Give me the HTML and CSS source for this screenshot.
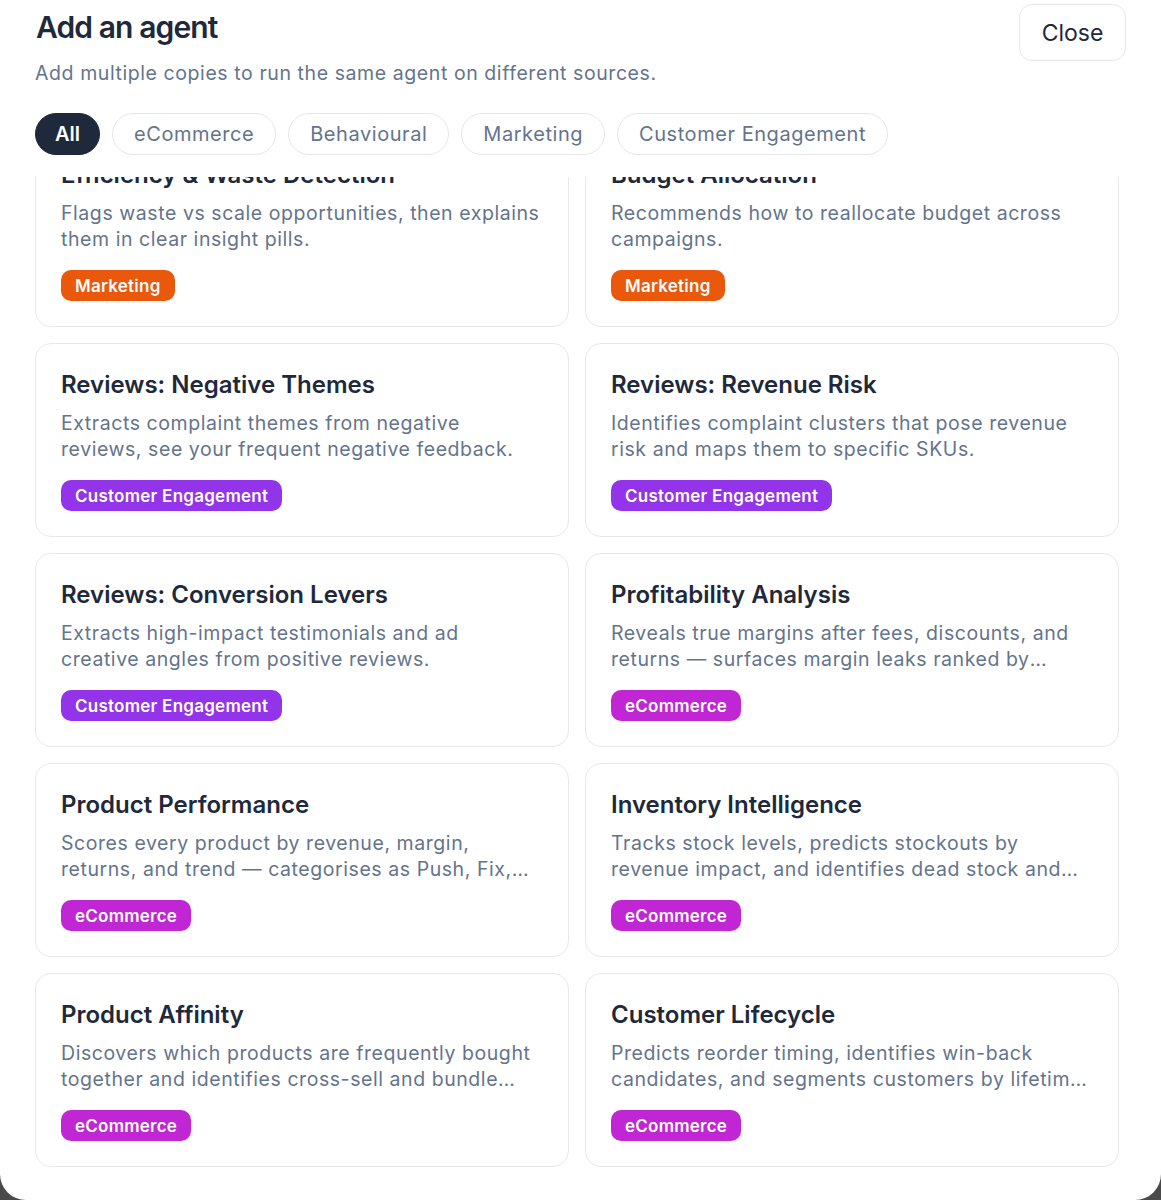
FILE: index.html
```html
<!DOCTYPE html>
<html lang="en">
<head>
<meta charset="utf-8">
<title>Add an agent</title>
<link rel="stylesheet" href="styles.css">
</head>
<body>
<div class="modal">
  <header class="head">
    <div class="head-text">
      <h1 class="title">Add an agent</h1>
      <p class="subtitle">Add multiple copies to run the same agent on different sources.</p>
    </div>
    <button class="close">Close</button>
  </header>
  <nav class="filters">
    <span class="pill pill-active">All</span>
    <span class="pill">eCommerce</span>
    <span class="pill">Behavioural</span>
    <span class="pill">Marketing</span>
    <span class="pill">Customer Engagement</span>
  </nav>
  <div class="scroll">
    <div class="grid">
      <div class="card">
        <h2 class="card-title">Efficiency &amp; Waste Detection</h2>
        <p class="card-desc">Flags waste vs scale opportunities, then explains them in clear insight pills.</p>
        <span class="tag tag-marketing">Marketing</span>
      </div>
      <div class="card">
        <h2 class="card-title">Budget Allocation</h2>
        <p class="card-desc">Recommends how to reallocate budget across campaigns.</p>
        <span class="tag tag-marketing">Marketing</span>
      </div>
      <div class="card">
        <h2 class="card-title">Reviews: Negative Themes</h2>
        <p class="card-desc">Extracts complaint themes from negative reviews, see your frequent negative feedback.</p>
        <span class="tag tag-engage">Customer Engagement</span>
      </div>
      <div class="card">
        <h2 class="card-title">Reviews: Revenue Risk</h2>
        <p class="card-desc">Identifies complaint clusters that pose revenue risk and maps them to specific SKUs.</p>
        <span class="tag tag-engage">Customer Engagement</span>
      </div>
      <div class="card">
        <h2 class="card-title">Reviews: Conversion Levers</h2>
        <p class="card-desc">Extracts high-impact testimonials and ad creative angles from positive reviews.</p>
        <span class="tag tag-engage">Customer Engagement</span>
      </div>
      <div class="card">
        <h2 class="card-title">Profitability Analysis</h2>
        <p class="card-desc">Reveals true margins after fees, discounts, and returns — surfaces margin leaks ranked by impact on your bottom line.</p>
        <span class="tag tag-ecom">eCommerce</span>
      </div>
      <div class="card">
        <h2 class="card-title">Product Performance</h2>
        <p class="card-desc">Scores every product by revenue, margin, returns, and trend — categorises as Push, Fix, Hold or Drop.</p>
        <span class="tag tag-ecom">eCommerce</span>
      </div>
      <div class="card">
        <h2 class="card-title">Inventory Intelligence</h2>
        <p class="card-desc">Tracks stock levels, predicts stockouts by revenue impact, and identifies dead stock and overstock.</p>
        <span class="tag tag-ecom">eCommerce</span>
      </div>
      <div class="card">
        <h2 class="card-title">Product Affinity</h2>
        <p class="card-desc">Discovers which products are frequently bought together and identifies cross-sell and bundle opportunities.</p>
        <span class="tag tag-ecom">eCommerce</span>
      </div>
      <div class="card">
        <h2 class="card-title">Customer Lifecycle</h2>
        <p class="card-desc">Predicts reorder timing, identifies win-back candidates, and segments customers by lifetime value.</p>
        <span class="tag tag-ecom">eCommerce</span>
      </div>
    </div>
  </div>
</div>
</body>
</html>
```
FILE: styles.css
```css
* { box-sizing: border-box; }
html, body { margin: 0; padding: 0; }
body {
  background: #4a4a4a;
  font-family: Inter, "Noto Sans", "Liberation Sans", sans-serif;
  color: #1e293b;
}
.modal {
  background: #ffffff;
  height: 1200px;
  border-radius: 0 0 26px 26px;
  overflow: hidden;
  padding: 0 35px;
  display: flex;
  flex-direction: column;
}
.head {
  display: flex;
  justify-content: space-between;
  align-items: flex-start;
}
.title {
  margin: 9px 0 0 1px;
  font-size: 30px;
  line-height: 36px;
  font-weight: 600;
  letter-spacing: -0.9px;
  color: #1e293b;
}
.subtitle {
  margin: 15px 0 0 0;
  font-size: 19.5px;
  line-height: 26px;
  letter-spacing: 0.58px;
  color: #64748b;
}
.close {
  margin-top: 4px;
  width: 107px;
  height: 57px;
  border: 1.5px solid #e5e7eb;
  border-radius: 13px;
  background: #fff;
  font-family: inherit;
  font-size: 23px;
  color: #1e293b;
  padding: 0;
}
.filters {
  display: flex;
  gap: 12px;
  margin-top: 27px;
}
.pill {
  display: inline-flex;
  align-items: center;
  height: 42px;
  padding: 0 21px;
  border: 1.5px solid #e5e7eb;
  border-radius: 21px;
  font-size: 20px;
  letter-spacing: 0.55px;
  color: #64748b;
  white-space: nowrap;
}
.pill-active {
  background: #1e293b;
  border-color: #1e293b;
  color: #fff;
  font-weight: 600;
  letter-spacing: 0;
  padding: 0 19px;
}
.scroll {
  margin-top: 22px;
  flex: 1;
  overflow: hidden;
  padding-right: 7px;
}
.grid {
  margin-top: -44px;
  display: grid;
  grid-template-columns: 1fr 1fr;
  gap: 16px;
}
.card {
  border: 1.5px solid #e6e8eb;
  border-radius: 16px;
  padding: 26px 27px 24px 25px;
  height: 194px;
  display: flex;
  flex-direction: column;
  align-items: flex-start;
}
.card-title {
  margin: 0;
  font-size: 24px;
  line-height: 30px;
  font-weight: 600;
  letter-spacing: 0;
  color: #1e293b;
}
.card-desc {
  margin: 10px 0 0 0;
  font-size: 19.5px;
  line-height: 26px;
  letter-spacing: 0.56px;
  color: #64748b;
  display: -webkit-box;
  -webkit-line-clamp: 2;
  -webkit-box-orient: vertical;
  overflow: hidden;
  height: 52px;
}
.tag {
  margin-top: 18px;
  display: inline-flex;
  align-items: center;
  height: 31px;
  padding: 0 14px;
  border-radius: 10px;
  color: #fff;
  font-size: 17px;
  font-weight: 600;
  letter-spacing: 0.25px;
  white-space: nowrap;
}
.tag-marketing { background: #ea580c; }
.tag-engage { background: #9333ea; }
.tag-ecom { background: #c026d3; }
```
